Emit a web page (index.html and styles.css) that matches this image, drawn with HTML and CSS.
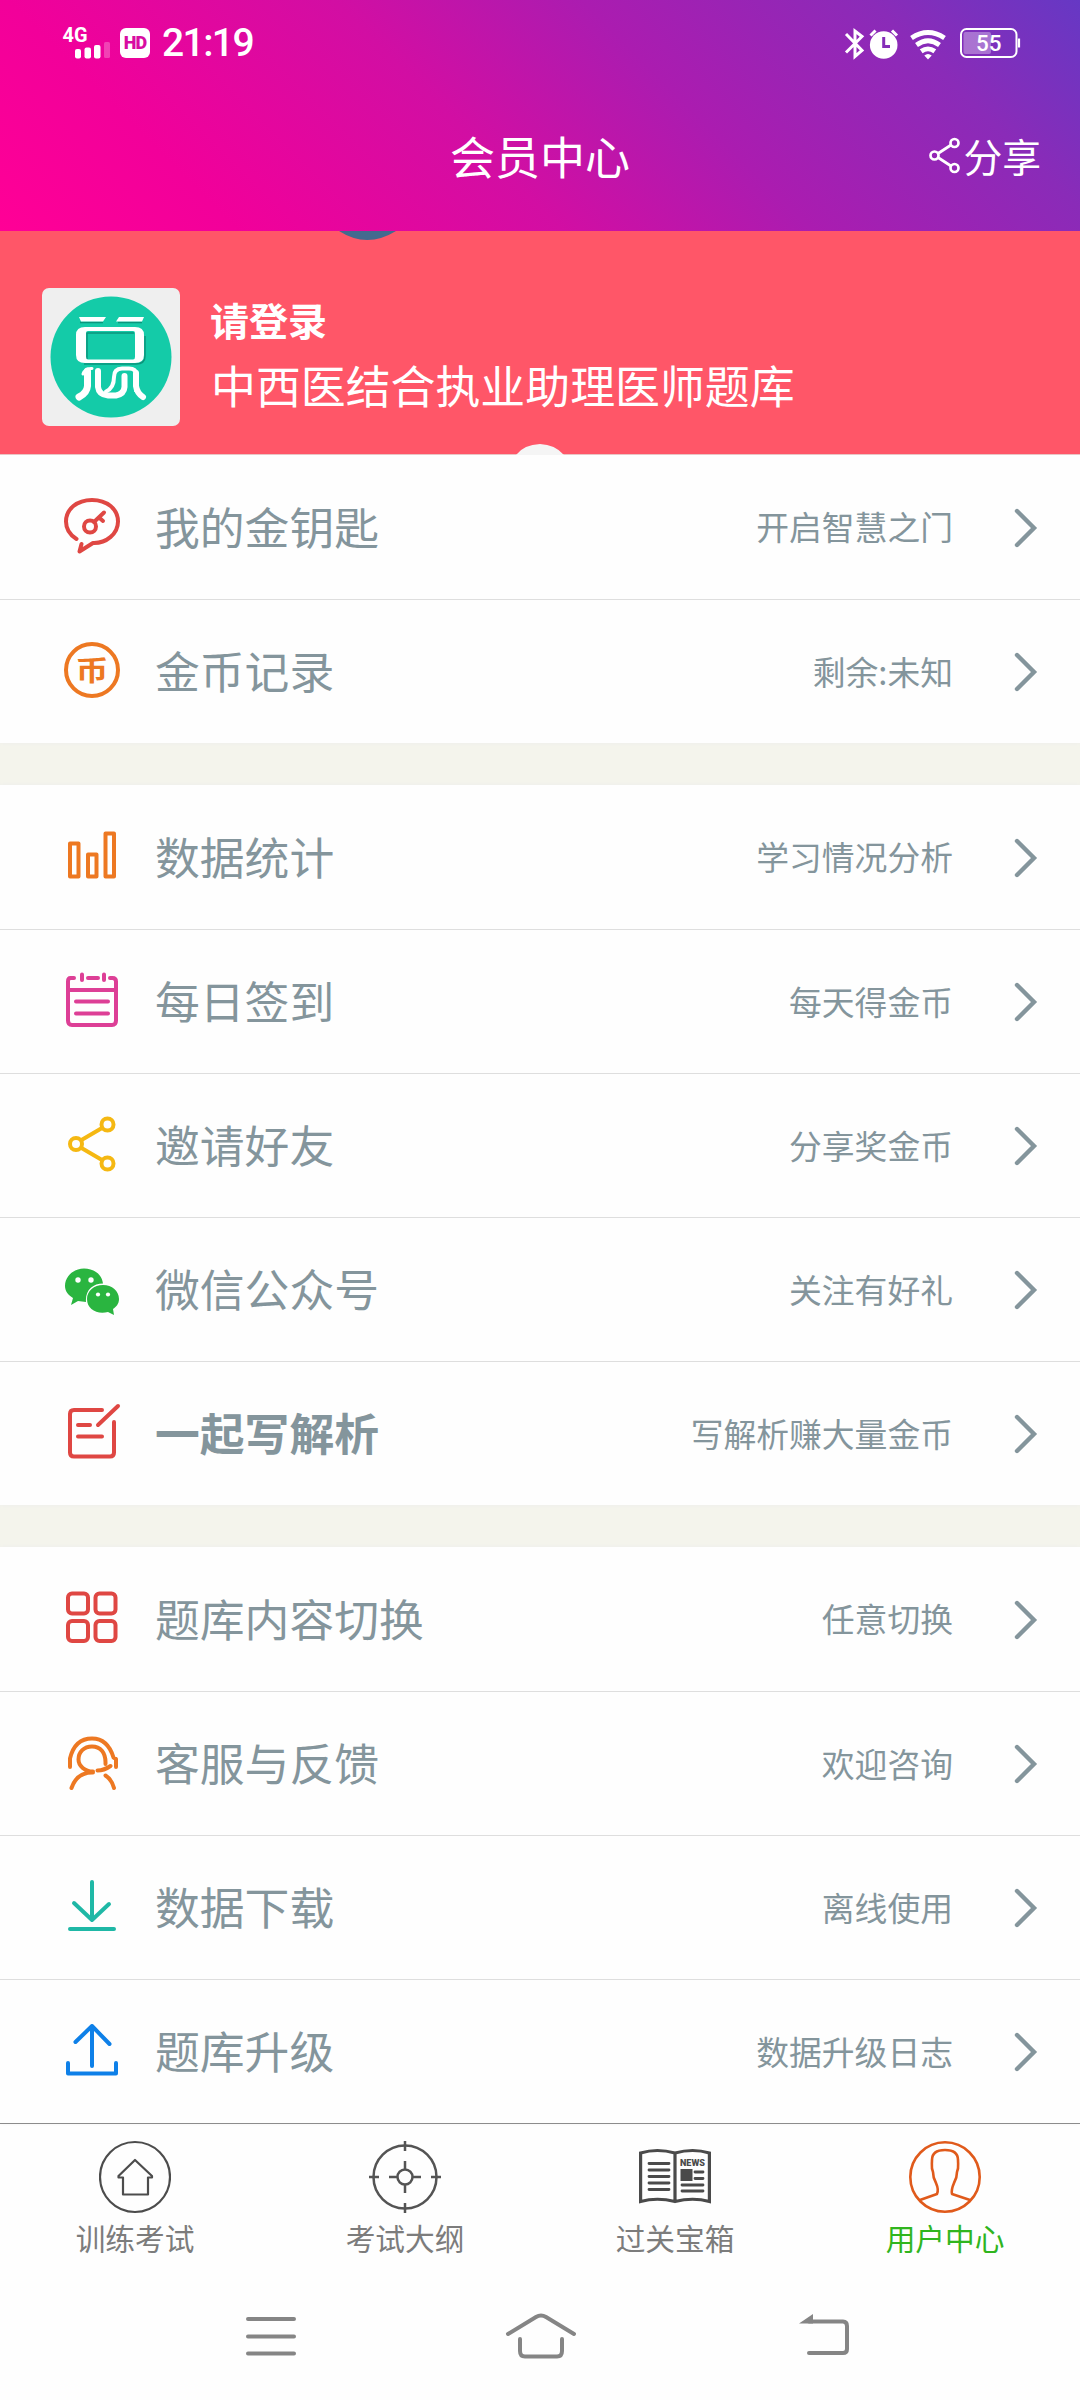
FILE: index.html
```html
<!DOCTYPE html>
<html lang="zh-CN">
<head>
<meta charset="utf-8">
<title>会员中心</title>
<link rel="stylesheet" href="styles.css">
</head>
<body>
<header class="header">
  <div class="status">
    <div class="status-left">
      <svg class="signal" width="50" height="50" viewBox="62 18 50 50" fill="#fff">
        <text class="net" x="62.500" y="42" textLength="25" lengthAdjust="spacingAndGlyphs">4G</text>
        <rect x="75" y="49" width="6" height="9.500" rx="2"/><rect x="84.500" y="47.500" width="6.500" height="11" rx="2"/><rect x="94" y="45" width="6.500" height="13.500" rx="2"/><rect x="104" y="42" width="6" height="16" rx="1.500" opacity=".25"/>
      </svg>
      <span class="hd">HD</span>
      <span class="clock">21:19</span>
    </div>
    <svg class="status-right" width="180" height="34" viewBox="844 26 180 34" fill="none" stroke="#fff">
      <path d="M846 34L862 50.500L855 56.500V31L862 36.500L846 52.500" stroke-width="3"/>
      <circle cx="883.700" cy="45" r="13.800" fill="#fff" stroke="none"/>
      <path d="M870.500 35.500L875.500 30.500M897 35.500L892 30.500" stroke-width="3"/>
      <path d="M883.700 37V46.500H890" stroke="#852eb8" stroke-width="3"/>
      <g stroke-width="4.800"><path d="M911.500 38Q928 27 944.500 38"/><path d="M916.500 45Q928 36.500 939.500 45"/><path d="M921.200 51.300Q928 46.500 934.800 51.300"/></g>
      <path d="M924.300 55.500L928 59.500L931.700 55.500Q928 52.500 924.300 55.500Z" fill="#fff" stroke="none"/>
      <rect x="961" y="29" width="55.500" height="28" rx="5.500" stroke-width="2"/>
      <path d="M1019 38.500V47.500" stroke-width="2.200"/>
      <rect x="963.500" y="32" width="27.500" height="22" rx="2" fill="#fff" opacity=".33" stroke="none"/>
      <text class="pct" x="976" y="51" textLength="25.500" lengthAdjust="spacingAndGlyphs">55</text>
    </svg>
  </div>
  <div class="titlebar">
    <h1 class="title">会员中心</h1>
    <div class="share">
      <svg width="32" height="38" viewBox="0 0 32 38" fill="none" stroke="#fff" stroke-width="2.700"><circle cx="5.500" cy="18.500" r="4"/><circle cx="25.500" cy="6" r="4"/><circle cx="25.500" cy="31" r="4"/><path d="M9 16.500L22 8M9 20.500L22 29"/></svg>
      <span>分享</span>
    </div>
  </div>
</header>

<section class="banner">
  <svg class="blob blob-top" width="58" height="10" viewBox="0 0 58 10"><path d="M0 0Q28 18 57 0Z" fill="#436a8f"/></svg>
  <svg class="blob blob-bottom" width="48" height="12" viewBox="0 0 48 12"><path d="M0 12Q8 1.500 24 1Q39 1.500 48 12Z" fill="#f5f5f5"/></svg>
  <svg class="avatar" width="138" height="138" viewBox="0 0 138 138">
    <rect width="138" height="138" rx="7" fill="#efefef"/>
    <circle cx="69" cy="69" r="60.500" fill="#14cba8"/>
    <path fill="none" stroke="#0b957c" stroke-width="1.500" d="M38 34.500H61M76 34.500H100M45 71V45H92M103 48V68Q103 76 94 76H42"/>
    <path d="M37 29H64L61 33.500H39ZM77 29H102L100 33.500H74Z" fill="#fff"/>
    <path fill-rule="evenodd" fill="#fff" d="M43 39H93Q102 39 102 47V67Q102 75 93 75H43Q34 75 34 67V47Q34 39 43 39ZM46 43Q44 43 44 45V69Q44 71.500 46 71.500H91Q93 71.500 93 69V45Q93 43 91 43Z"/>
    <g fill="none" stroke="#fff" stroke-linecap="round" stroke-linejoin="round"><path d="M45.500 83V98Q45 105 37 109" stroke-width="7"/><path d="M37 109.500L46 103M102 109.500L93 103" stroke-width="2"/><path d="M56 83V99Q57 107 66 107.500H74Q82 106 82.500 99V88" stroke-width="6"/><path d="M50 80.500Q43 80 41 86" stroke-width="3"/><path d="M64 103.500Q72 100 72 89Q72 80.500 80 80.500H87Q94 80.500 95 87" stroke-width="4"/><path d="M94 85V98Q95 105 101 109" stroke-width="6"/></g>
  </svg>
  <div class="who">
    <div class="login">请登录</div>
    <div class="bank">中西医结合执业助理医师题库</div>
  </div>
</section>

<main class="menu">
  <section class="group">
    <div class="row"><svg class="icon" viewBox="0 0 60 60" stroke="#df4743"><path d="M14.500 44C8 40 4 34 4 26.500C4 14 15 5 30 5C45 5 56 14 56 26.500C56 39 44 48.500 31 48L17.500 56.500L19.500 49"/><circle cx="28" cy="31.500" r="6" /><path d="M32 27L42 17.500M37 22.500L41 26"/></svg><span class="label">我的金钥匙</span><span class="note">开启智慧之门</span><svg class="chev" viewBox="0 0 24 40"><path d="M3 3L20 20L3 37"/></svg></div>
    <div class="row"><svg class="icon" viewBox="0 0 60 60" stroke="#ed7822"><circle cx="30" cy="30" r="26"/><text class="coin" x="30" y="48" transform="scale(1 .86)">币</text></svg><span class="label">金币记录</span><span class="note">剩余:未知</span><svg class="chev" viewBox="0 0 24 40"><path d="M3 3L20 20L3 37"/></svg></div>
  </section>
  <section class="group">
    <div class="row"><svg class="icon" viewBox="0 0 60 60" stroke="#ed7822"><path d="M8 18.500H16.500V51.500H8ZM26 29.500H34.500V51.500H26ZM43.500 8.500H52V51.500H43.500Z"/></svg><span class="label">数据统计</span><span class="note">学习情况分析</span><svg class="chev" viewBox="0 0 24 40"><path d="M3 3L20 20L3 37"/></svg></div>
    <div class="row"><svg class="icon" viewBox="0 0 60 60" stroke="#dd3f96"><path d="M12 8H8.500Q6 8 6 11.500V50.500Q6 55 10 55H50Q54 55 54 50.500V11.500Q54 8 50.500 8H48M26 8H36M6 20H54M20 4.500V10M42 4.500V10M14 31.500H46M14 43.500H46"/></svg><span class="label">每日签到</span><span class="note">每天得金币</span><svg class="chev" viewBox="0 0 24 40"><path d="M3 3L20 20L3 37"/></svg></div>
    <div class="row"><svg class="icon" viewBox="0 0 60 60" stroke="#f5b812"><circle cx="14" cy="30" r="6"/><circle cx="45.500" cy="10.500" r="6"/><circle cx="45.500" cy="49.500" r="6"/><path d="M19.500 26L40 14M19.500 34L40 46"/></svg><span class="label">邀请好友</span><span class="note">分享奖金币</span><svg class="chev" viewBox="0 0 24 40"><path d="M3 3L20 20L3 37"/></svg></div>
    <div class="row"><svg class="icon" viewBox="0 0 60 60" fill="#2ab540"><path d="M22 10.500C32 10.500 40 16.500 41 25.500C31 25.500 23 32 24 44L16 43L9 47L11 40C6 37 3 33 3 28C3 18 12 10.500 22 10.500ZM41 27C50 27 57 33 57 41C57 46 54 49 51 51L52 57L46 54C35 57 25 51 25 41C25 33 32 27 41 27Z"/><g fill="#fff"><circle cx="16" cy="22" r="2.700"/><circle cx="29" cy="22" r="2.700"/><circle cx="36" cy="36.500" r="2.100"/><circle cx="46" cy="36.500" r="2.100"/></g></svg><span class="label">微信公众号</span><span class="note">关注有好礼</span><svg class="chev" viewBox="0 0 24 40"><path d="M3 3L20 20L3 37"/></svg></div>
    <div class="row"><svg class="icon" viewBox="0 0 60 60" stroke="#df4743"><path d="M40 8H12Q8 8 8 12V50.500Q8 54.500 12 54.500H48Q52 54.500 52 50.500V20M56 4L36 23M16 23H28M16 34.500H40"/></svg><span class="label bold">一起写解析</span><span class="note">写解析赚大量金币</span><svg class="chev" viewBox="0 0 24 40"><path d="M3 3L20 20L3 37"/></svg></div>
  </section>
  <section class="group">
    <div class="row"><svg class="icon" viewBox="0 0 60 60" stroke="#df4743"><rect x="6" y="6.500" width="20" height="20" rx="4"/><rect x="33.500" y="6.500" width="20" height="20" rx="4"/><rect x="6" y="34" width="20" height="20" rx="4"/><rect x="33.500" y="34" width="20" height="20" rx="4"/></svg><span class="label">题库内容切换</span><span class="note">任意切换</span><svg class="chev" viewBox="0 0 24 40"><path d="M3 3L20 20L3 37"/></svg></div>
    <div class="row"><svg class="icon" viewBox="0 0 60 60" stroke="#ed7822"><path d="M8 35V26.500C11 14 18 6.500 30 6.500C42 6.500 48 14 51.500 25.500L54 27V35M31 39.500C23 39.500 16.500 34 16.500 27.500C16.500 20 22 14.500 30 14.500C38 14.500 44 20 43.500 32M35.500 38.500Q42 38.500 48.500 34M9.500 56Q15 40 31 40.500M43.500 43.500Q50 48 52 56"/></svg><span class="label">客服与反馈</span><span class="note">欢迎咨询</span><svg class="chev" viewBox="0 0 24 40"><path d="M3 3L20 20L3 37"/></svg></div>
    <div class="row"><svg class="icon" viewBox="0 0 60 60" stroke="#1fb8a6"><path d="M30 6V44M12 27L30 44L47 28M8 53H52"/></svg><span class="label">数据下载</span><span class="note">离线使用</span><svg class="chev" viewBox="0 0 24 40"><path d="M3 3L20 20L3 37"/></svg></div>
    <div class="row"><svg class="icon" viewBox="0 0 60 60" stroke="#0e80e8"><path d="M30 46V6M13.500 22L30 6L47.500 24M6 43V53.500H54V43"/></svg><span class="label">题库升级</span><span class="note">数据升级日志</span><svg class="chev" viewBox="0 0 24 40"><path d="M3 3L20 20L3 37"/></svg></div>
  </section>
</main>

<nav class="tabs">
  <div class="tab"><svg class="tab-icon" viewBox="0 0 72 74" fill="none" stroke="#4c4c4c" stroke-width="2.200" stroke-linejoin="round"><circle cx="36" cy="37" r="35"/><path d="M36 20L19.500 36V37.500H24V54.500H49V37.500H53V36Z"/></svg><span>训练考试</span></div>
  <div class="tab"><svg class="tab-icon" viewBox="0 0 72 74" fill="none" stroke="#545454" stroke-width="2.500"><circle cx="36" cy="37" r="31.500"/><circle cx="36" cy="37" r="7.500"/><path d="M36 1V11M36 63V73M0 37H10M62 37H72M36 21V29.500M36 44.500V53M20 37H28.500M43.500 37H52"/></svg><span>考试大纲</span></div>
  <div class="tab"><svg class="tab-icon" viewBox="0 0 72 74" fill="none" stroke="#4a4a4a" stroke-width="3.200"><path d="M1.600 13Q18 8 36 13Q54 8 70.400 13V61.500Q54 57 36 61.500Q18 57 1.600 61.500ZM36 13V62"/><path d="M10 23.500H30M10 30H30M10 36.500H30M10 43H30M10 49.500H30M56 32H64M56 38.500H64M43 45H64M43 51H64" stroke-linecap="round" stroke-width="2.800"/><rect x="41.500" y="29" width="12" height="12" fill="#4a4a4a" stroke="none"/><text class="news" x="41" y="26" textLength="25" lengthAdjust="spacingAndGlyphs">NEWS</text></svg><span>过关宝箱</span></div>
  <div class="tab active"><svg class="tab-icon" viewBox="0 0 72 74" fill="none" stroke="#e05a1b" stroke-width="2.600"><circle cx="36" cy="37" r="34.700"/><path d="M11 60L28 54Q30 50 27 43C24 38 24 36 24 32C22 28 23 25 23 20Q23 10 36 10Q49 10 49 20C49 25 50 28 48 32C48 36 48 38 45 43Q42 50 43 54L61 60" stroke-linejoin="round"/></svg><span>用户中心</span></div>
</nav>
<footer class="sysnav">
  <svg width="52" height="44" viewBox="0 0 52 44"><path d="M3 5H49M3 22.500H49M3 39.500H49"/></svg>
  <svg class="home" width="72" height="50" viewBox="0 0 72 50"><path d="M3 23L31 6Q36 3 41 6L69 23M15 28V40Q15 45.500 20 45.500H52Q57 45.500 57 40V28"/></svg>
  <svg width="54" height="44" viewBox="0 0 54 44"><path d="M12 7.500H46Q50 7.500 50 12V35Q50 39 46 39H12"/><path class="tip" d="M2 9.500L16 0V9.500Z"/></svg>
</footer>
</body>
</html>
```

FILE: styles.css
```css
* { box-sizing: border-box; }
body {
  margin: 0;
  width: 1080px;
  height: 2400px;
  overflow: hidden;
  display: flex;
  flex-direction: column;
  background: #fefefe;
  font-family: "Noto Sans CJK SC", sans-serif;
}
svg { display: block; flex: none; }

.header {
  height: 231px;
  color: #fff;
  background: linear-gradient(45deg, #ff0096 0%, #f2009a 18%, #d20ea3 43%, #ab1cb0 62%, #8a2bb8 84%, #6638c4 100%);
}
.status {
  height: 86px;
  padding: 0 56px 0 62px;
  display: flex;
  align-items: center;
  justify-content: space-between;
}
.status-left { display: flex; align-items: center; }
.net { font: 700 21px Roboto, sans-serif; }
.hd {
  width: 30px;
  height: 30px;
  margin-left: 8px;
  border-radius: 6px;
  background: #fff;
  color: #d80ca2;
  font: 900 18px/30px Roboto, sans-serif;
  letter-spacing: -1px;
  text-align: center;
}
.clock {
  margin-left: 12px;
  font: 500 39px/44px Roboto, sans-serif;
  letter-spacing: -1.6px;
}
.pct { font: 500 22px Roboto, sans-serif; fill: #fff; stroke: none; }
.titlebar {
  height: 139px;
  padding: 0 39px;
  display: grid;
  grid-template-columns: 1fr auto 1fr;
  align-items: center;
}
.title {
  grid-column: 2;
  margin: 0;
  font-size: 45px;
  font-weight: 400;
  line-height: 60px;
}
.share {
  justify-self: end;
  display: flex;
  align-items: center;
  gap: 2px;
  font-size: 38.8px;
  line-height: 56px;
}
.share span { margin-top: -2px; }

.banner {
  position: relative;
  height: 224px;
  padding: 57px 42px 0;
  display: flex;
  gap: 31px;
  color: #fff;
  background: #ff5668;
  border-bottom: 1px solid #e9c4c4;
}
.blob { position: absolute; }
.blob-top { left: 339px; top: 0; }
.blob-bottom { left: 516px; bottom: -1px; }
.who { padding-top: 2px; }
.login { font-size: 39px; font-weight: 700; line-height: 58px; margin-left: -1px; }
.bank { font-size: 44.9px; line-height: 74px; }

.menu {
  height: 1668px;
  display: flex;
  flex-direction: column;
  gap: 42px;
  background: #f4f4ec;
}
.group { background: #fefefe; box-shadow: 0 0 4px #eeeeec; }
.row {
  height: 144px;
  padding: 0 42px 0 62px;
  display: flex;
  align-items: center;
  color: #84959c;
}
.row + .row { border-top: 1px solid #dedede; }
.icon {
  width: 60px;
  height: 60px;
  margin-top: -4px;
  stroke-width: 4;
  stroke-linecap: round;
  stroke-linejoin: round;
}
.icon:not([fill]) { fill: none; }
.coin { font-size: 33px; font-weight: 700; text-anchor: middle; fill: #ed7822; stroke: none; }
.label { margin: -3px 0 0 33px; font-size: 44.8px; line-height: 60px; }
.bold { font-weight: 700; }
.note { margin: -2px 0 0 auto; font-size: 32.8px; line-height: 48px; }
.chev {
  width: 24px;
  height: 40px;
  margin: 1px 0 0 61px;
  fill: none;
  stroke: #84959c;
  stroke-width: 4.4;
  stroke-linecap: round;
}

.tabs {
  height: 144px;
  border-top: 1px solid #8c8c8c;
  display: grid;
  grid-template-columns: repeat(4, 1fr);
}
.tab {
  display: flex;
  flex-direction: column;
  align-items: center;
  padding-top: 16px;
  font-size: 29.7px;
  line-height: 44px;
  color: #7c7c7c;
}
.tab span { margin-top: 2px; }
.tab-icon { width: 72px; height: 74px; }
.news { font: 900 9px Roboto, sans-serif; fill: #4a4a4a; stroke: none; }
.active { color: #30b51e; }

.sysnav {
  height: 133px;
  padding: 5px 229px 0 245px;
  display: flex;
  align-items: center;
  justify-content: space-between;
}
.home { margin-right: 12px; }
.sysnav path { fill: none; stroke: #858585; stroke-width: 4; stroke-linecap: round; }
.sysnav .tip { fill: #858585; stroke: none; }
```
